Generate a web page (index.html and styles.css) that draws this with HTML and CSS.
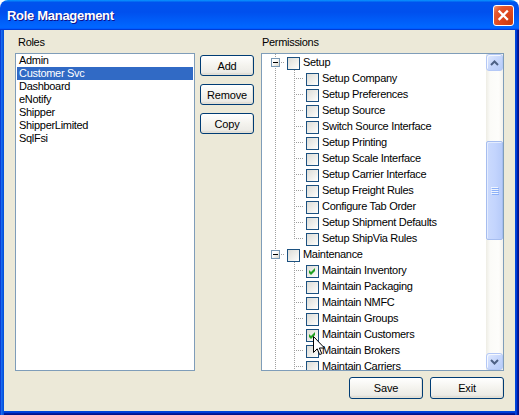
FILE: index.html
```html
<!DOCTYPE html>
<html>
<head>
<meta charset="utf-8">
<title>Role Management</title>
<link rel="stylesheet" href="styles.css">
</head>
<body>
<div class="window">
  <div class="titlebar">
    <span class="title">Role Management</span>
    <span class="close"><svg width="19" height="19" viewBox="0 0 19 19"><path d="M5.5 5.5 L13 13 M13 5.5 L5.5 13" stroke="#fff" stroke-width="2.3" stroke-linecap="square" fill="none"/></svg></span>
  </div>
  <div class="frame">
    <div class="panes">
      <div class="col roles">
        <div class="label">Roles</div>
        <div class="listbox">
          <div class="item">Admin</div>
          <div class="item selected">Customer Svc</div>
          <div class="item">Dashboard</div>
          <div class="item">eNotify</div>
          <div class="item">Shipper</div>
          <div class="item">ShipperLimited</div>
          <div class="item">SqlFsi</div>
        </div>
      </div>
      <div class="col actions">
        <button class="btn">Add</button>
        <button class="btn">Remove</button>
        <button class="btn">Copy</button>
      </div>
      <div class="col perms">
        <div class="label">Permissions</div>
        <div class="treebox">
          <div class="tree">
            <div class="row"><span class="g x"><span class="exp"></span></span><span class="cb"></span><span class="txt">Setup</span></div>
            <div class="row"><span class="g v"></span><span class="g t"></span><span class="cb"></span><span class="txt">Setup Company</span></div>
            <div class="row"><span class="g v"></span><span class="g t"></span><span class="cb"></span><span class="txt">Setup Preferences</span></div>
            <div class="row"><span class="g v"></span><span class="g t"></span><span class="cb"></span><span class="txt">Setup Source</span></div>
            <div class="row"><span class="g v"></span><span class="g t"></span><span class="cb"></span><span class="txt">Switch Source Interface</span></div>
            <div class="row"><span class="g v"></span><span class="g t"></span><span class="cb"></span><span class="txt">Setup Printing</span></div>
            <div class="row"><span class="g v"></span><span class="g t"></span><span class="cb"></span><span class="txt">Setup Scale Interface</span></div>
            <div class="row"><span class="g v"></span><span class="g t"></span><span class="cb"></span><span class="txt">Setup Carrier Interface</span></div>
            <div class="row"><span class="g v"></span><span class="g t"></span><span class="cb"></span><span class="txt">Setup Freight Rules</span></div>
            <div class="row"><span class="g v"></span><span class="g t"></span><span class="cb"></span><span class="txt">Configure Tab Order</span></div>
            <div class="row"><span class="g v"></span><span class="g t"></span><span class="cb"></span><span class="txt">Setup Shipment Defaults</span></div>
            <div class="row"><span class="g v"></span><span class="g l"></span><span class="cb"></span><span class="txt">Setup ShipVia Rules</span></div>
            <div class="row"><span class="g x"><span class="exp"></span></span><span class="cb"></span><span class="txt">Maintenance</span></div>
            <div class="row"><span class="g v"></span><span class="g t"></span><span class="cb"><svg width="11" height="11" viewBox="0 0 11 11"><polygon points="2,4 4,6 8,2 8,5 4,9 2,7" fill="#21A121"/></svg></span><span class="txt">Maintain Inventory</span></div>
            <div class="row"><span class="g v"></span><span class="g t"></span><span class="cb"></span><span class="txt">Maintain Packaging</span></div>
            <div class="row"><span class="g v"></span><span class="g t"></span><span class="cb"></span><span class="txt">Maintain NMFC</span></div>
            <div class="row"><span class="g v"></span><span class="g t"></span><span class="cb"></span><span class="txt">Maintain Groups</span></div>
            <div class="row"><span class="g v"></span><span class="g t"></span><span class="cb"><svg width="11" height="11" viewBox="0 0 11 11"><polygon points="2,4 4,6 8,2 8,5 4,9 2,7" fill="#21A121"/></svg></span><span class="txt">Maintain Customers</span></div>
            <div class="row"><span class="g v"></span><span class="g t"></span><span class="cb"></span><span class="txt">Maintain Brokers</span></div>
            <div class="row"><span class="g v"></span><span class="g t"></span><span class="cb"></span><span class="txt">Maintain Carriers</span></div>
          </div>
          <div class="sb">
            <div class="sb-btn"><svg width="9" height="6" viewBox="0 0 9 6"><path d="M1 5 L4.5 1.5 L8 5" stroke="#4D6185" stroke-width="2" fill="none"/></svg></div>
            <div class="sb-track">
              <div class="thumb"><span class="grip"></span><span class="grip"></span><span class="grip"></span><span class="grip"></span></div>
            </div>
            <div class="sb-btn"><svg width="9" height="6" viewBox="0 0 9 6"><path d="M1 1 L4.5 4.5 L8 1" stroke="#4D6185" stroke-width="2" fill="none"/></svg></div>
          </div>
          <svg class="cursor" width="12" height="20" viewBox="0 0 12 20"><path d="M0.5 0.5 V16.5 L4.2 12.8 L6.6 18.6 L8.8 17.7 L6.4 12 H11.5 Z" fill="#fff" stroke="#000" stroke-width="1" stroke-linejoin="miter"/></svg>
        </div>
      </div>
    </div>
    <div class="footer">
      <button class="btn wide">Save</button>
      <button class="btn wide">Exit</button>
    </div>
  </div>
</div>
</body>
</html>
```

FILE: styles.css
```css
* { box-sizing: border-box; }
html, body { margin: 0; padding: 0; background: #fff; }
body {
  font-family: "Liberation Sans", Arial, sans-serif;
  font-size: 11px;
  color: #000;
}
.window {
  width: 519px;
  height: 415px;
  display: flex;
  flex-direction: column;
  border-radius: 8px 8px 0 0;
  overflow: hidden;
}
.titlebar {
  height: 30px;
  flex: none;
  display: flex;
  align-items: flex-start;
  justify-content: space-between;
  padding: 0 5px 0 7px;
  background: linear-gradient(180deg, #0997ff, #0053ee 8%, #0050ee 40%, #0066ff 88%, #0066ff 93%, #005bff 95%, #003dd7 96%, #003dd7);
}
.title {
  margin-top: 8px;
  line-height: 16px;
  color: #fff;
  font-weight: bold;
  font-size: 13px;
  letter-spacing: -0.3px;
  text-shadow: 1px 1px #0f1089;
}
.close {
  margin-top: 5px;
  width: 21px;
  height: 21px;
  border: 1px solid #fff;
  border-radius: 3px;
  background: radial-gradient(circle at 85% 85%, #c93d10 0%, #e0461d 45%, #e5592f 75%, #f29878 100%);
  display: flex;
}
.frame {
  flex: 1;
  background: #ece9d8;
  padding: 6px 15px 16px 15px;
  display: flex;
  flex-direction: column;
  box-shadow:
    inset 1px 0 #0b3fd4, inset 2px 0 #1a6bef, inset 3px 0 #0d5de6, inset 4px 0 #0453db,
    inset -1px 0 #00138c, inset -2px 0 #001ea0, inset -3px 0 #003bda, inset -4px 0 #0047d8,
    inset 0 -1px #00138c, inset 0 -2px #001ea0, inset 0 -3px #003bda, inset 0 -4px #0047d8;
}
.panes {
  display: flex;
  height: 335px;
  flex: none;
}
.label {
  height: 13px;
  line-height: 13px;
  margin-bottom: 4px;
  letter-spacing: -0.3px;
}
.roles { width: 180px; flex: none; }
.roles .label { padding-left: 3px; }
.listbox {
  height: 318px;
  border: 1px solid #7f9db9;
  background: #fff;
  padding: 0 1px;
}
.item {
  height: 13px;
  line-height: 13px;
  padding-left: 2px;
  letter-spacing: -0.3px;
  white-space: nowrap;
}
.item.selected { background: #316ac5; color: #fff; }

.actions {
  width: 54px;
  flex: none;
  margin-left: 5px;
  padding-top: 19px;
  display: flex;
  flex-direction: column;
  gap: 8px;
}
.btn {
  font-family: "Liberation Sans", Arial, sans-serif;
  font-size: 11px;
  letter-spacing: -0.2px;
  color: #000;
  height: 21px;
  padding: 0;
  border: 1px solid #003c74;
  border-radius: 3px;
  background: linear-gradient(180deg, #ffffff, #f4f3ee 50%, #ecebe6 86%, #d6d0c5);
  box-shadow: inset -1px -1px 0 #e3e0d6;
}
.perms { width: 243px; flex: none; margin-left: 7px; }
.perms .label { padding-left: 1px; }
.treebox {
  position: relative;
  height: 318px;
  border: 1px solid #7f9db9;
  background: #fff;
  display: flex;
}
.tree {
  flex: 1;
  overflow: hidden;
  padding-left: 4px;
  --dotv: repeating-linear-gradient(to bottom, #a0a0a0 0 1px, transparent 1px 2px);
  --doth: repeating-linear-gradient(to right, #a0a0a0 0 1px, transparent 1px 2px);
}
.row {
  display: flex;
  height: 16px;
  flex: none;
}
.g { width: 19px; height: 16px; flex: none; display: block; }
.g.v { background: var(--dotv) 9px 0 / 1px 16px no-repeat; }
.g.t { background: var(--doth) 11px 8px / 10px 1px no-repeat, var(--dotv) 9px 0 / 1px 16px no-repeat; }
.g.l { background: var(--doth) 11px 8px / 10px 1px no-repeat, var(--dotv) 9px 0 / 1px 9px no-repeat; }
.g.x { background: var(--doth) 15px 8px / 6px 1px no-repeat, var(--dotv) 9px 0 / 1px 16px no-repeat; }
.exp {
  display: flex;
  align-items: center;
  justify-content: center;
  width: 9px;
  height: 9px;
  margin: 4px 0 0 5px;
  border: 1px solid #7898b5;
  background: linear-gradient(135deg, #ffffff 35%, #d9d6cc 100%);
}
.exp::after {
  content: "";
  width: 5px;
  height: 1px;
  background: #000;
}
.cb {
  flex: none;
  width: 13px;
  height: 13px;
  margin: 3px 0 0 2px;
  border: 1px solid #1c5180;
  background: linear-gradient(135deg, #dcdcd7 0%, #f4f4f1 70%, #ffffff 100%);
  display: flex;
}
.txt {
  margin-left: 3px;
  line-height: 16px;
  white-space: nowrap;
  letter-spacing: -0.3px;
}
.sb {
  width: 17px;
  flex: none;
  display: flex;
  flex-direction: column;
  background: linear-gradient(to right, #eeede5, #fbfbf8 25%, #fdfdfb 75%, #f3f1ec);
}
.sb-btn {
  height: 17px;
  flex: none;
  border: 1px solid #b4c8f6;
  border-radius: 3px;
  background: linear-gradient(135deg, #e1eafe, #c7d7fc 50%, #b6cbf8);
  box-shadow: inset 1px 1px #f5f8fe;
  display: flex;
  align-items: center;
  justify-content: center;
}
.sb-track { flex: 1; padding-top: 70px; }
.thumb {
  height: 99px;
  border: 1px solid #a6bdef;
  border-radius: 2px;
  background: linear-gradient(to right, #cbdafd, #c3d4fd 55%, #b7cbf9);
  box-shadow: inset 1px 1px #e4ecfe;
  display: flex;
  flex-direction: column;
  align-items: center;
  justify-content: center;
  gap: 1px;
}
.grip {
  width: 7px;
  height: 1px;
  background: #eef4fe;
  box-shadow: 1px 1px #8cb0f8;
}
.cursor {
  position: absolute;
  left: 51px;
  top: 282px;
}
.footer {
  margin-top: 6px;
  height: 22px;
  flex: none;
  display: flex;
  justify-content: flex-end;
  gap: 7px;
}
.btn.wide { width: 74px; height: 22px; }
```
